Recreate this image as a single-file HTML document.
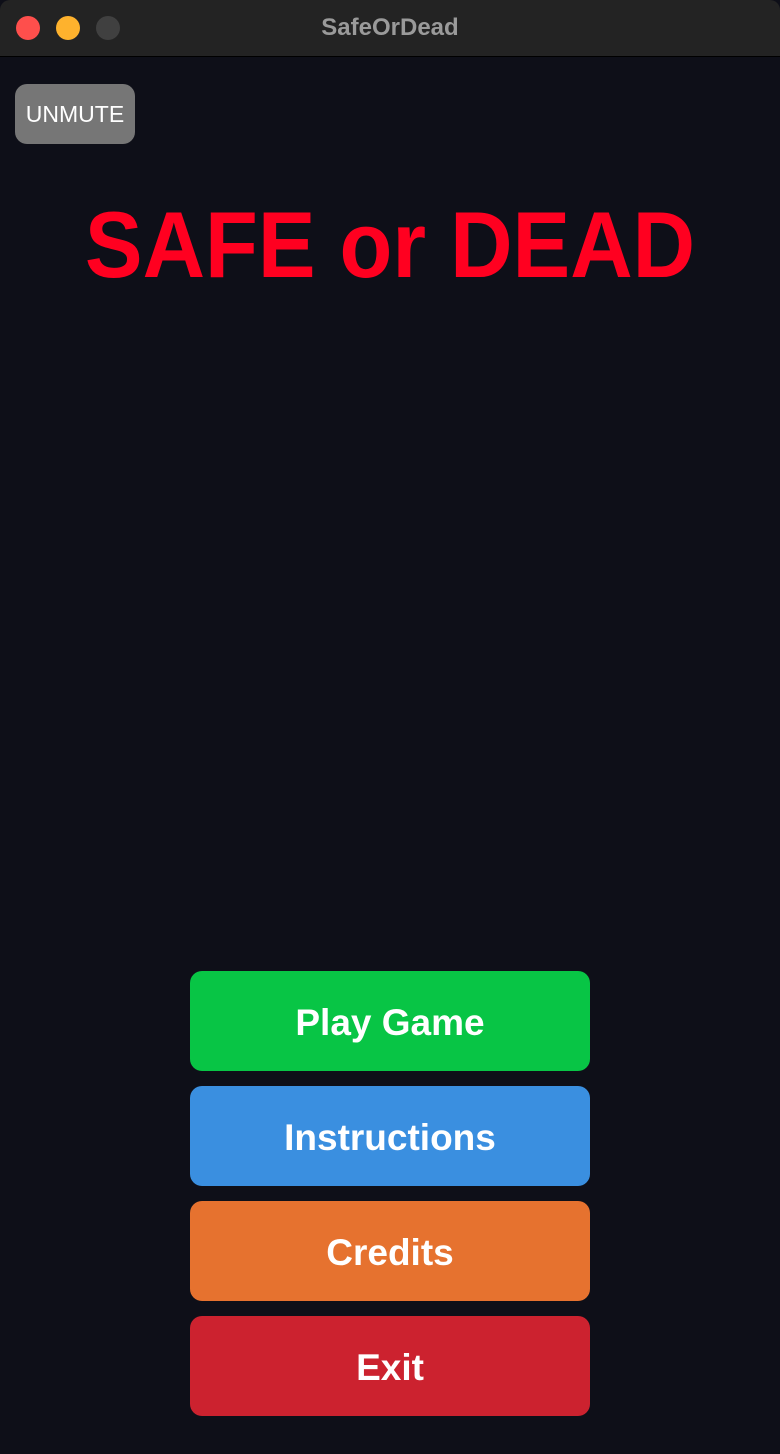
<!DOCTYPE html>
<html><head><style>
*{margin:0;padding:0;box-sizing:border-box}
body{width:780px;height:1454px;background:#0e0f18;font-family:"Liberation Sans",sans-serif;position:relative;overflow:hidden}
.tb{position:absolute;left:0;top:0;width:780px;height:57px;background:#232323;border-bottom:1px solid #000;border-radius:10px 10px 0 0}
.d{position:absolute;top:16px;width:24px;height:24px;border-radius:50%}
.tt{position:absolute;top:0;width:780px;text-align:center;line-height:55px;color:#9a9a9a;font-weight:bold;font-size:24px}
.um{position:absolute;left:15px;top:84px;width:120px;height:60px;border-radius:12px;background:#767676;color:#fff;font-size:23px;text-align:center;line-height:60px}
h1{position:absolute;top:190px;width:780px;text-align:center;color:#ff0020;font-size:94px;font-weight:bold;line-height:110px;transform:scaleX(0.92)}
.b{position:absolute;left:190px;width:400px;height:100px;border-radius:12px;color:#fff;font-weight:bold;font-size:37px;text-align:center;line-height:104px}
</style></head><body>
<div class="tb"><div class="d" style="left:16px;background:#fe4f4c"></div><div class="d" style="left:56px;background:#feb22d"></div><div class="d" style="left:96px;background:#404040"></div><div class="tt">SafeOrDead</div></div>
<div class="um">UNMUTE</div>
<h1>SAFE or DEAD</h1>
<div class="b" style="top:971px;background:#08c545">Play Game</div>
<div class="b" style="top:1086px;background:#3a8fe0">Instructions</div>
<div class="b" style="top:1201px;background:#e6722f">Credits</div>
<div class="b" style="top:1316px;background:#cc222f">Exit</div>
</body></html>
